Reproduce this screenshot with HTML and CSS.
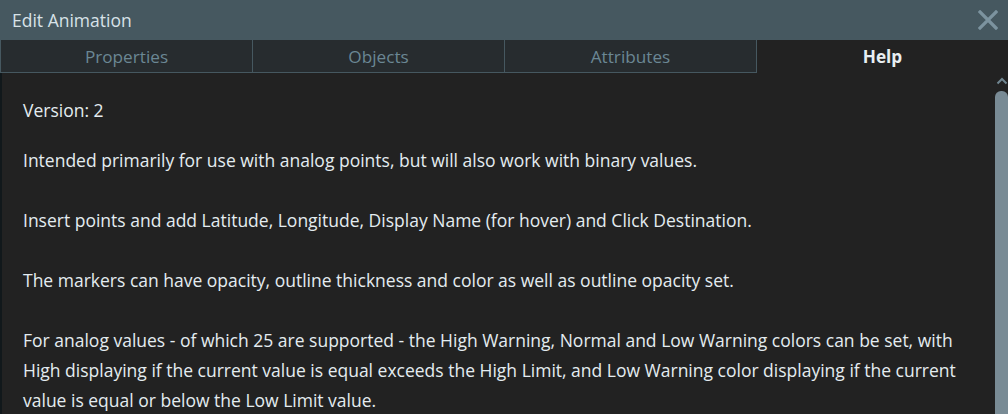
FILE: index.html
```html
<!DOCTYPE html>
<html>
<head>
<meta charset="utf-8">
<link rel="stylesheet" href="styles.css">
</head>
<body>
<div class="dialog">
  <div class="titlebar">
    <span class="title">Edit Animation</span>
    <svg class="close" width="20" height="20" viewBox="0 0 20 20"><path d="M2 2 L18 18 M18 2 L2 18" stroke="#7c939f" stroke-width="3.2" stroke-linecap="square"/></svg>
  </div>
  <div class="tabs">
    <div class="tab">Properties</div>
    <div class="tab">Objects</div>
    <div class="tab">Attributes</div>
    <div class="tab active">Help</div>
  </div>
  <div class="body">
    <div class="content">
      <p class="version">Version: 2</p>
      <p>Intended primarily for use with analog points, but will also work with binary values.</p>
      <p>Insert points and add Latitude, Longitude, Display Name (for hover) and Click Destination.</p>
      <p>The markers can have opacity, outline thickness and color as well as outline opacity set.</p>
      <p>For analog values - of which 25 are supported - the High Warning, Normal and Low Warning colors can be set, with High displaying if the current value is equal exceeds the High Limit, and Low Warning color displaying if the current value is equal or below the Low Limit value.</p>
    </div>
    <div class="scrollbar">
      <svg class="arrow" width="12" height="8" viewBox="0 0 12 8"><path d="M1.5 6.5 L6 2 L10.5 6.5" fill="none" stroke="#6f8590" stroke-width="2"/></svg>
      <div class="thumb"></div>
    </div>
  </div>
</div>
</body>
</html>
```
FILE: styles.css
```css
html, body {
  margin: 0;
  padding: 0;
  background: #222222;
}
.dialog {
  width: 1008px;
  height: 414px;
  overflow: hidden;
  display: flex;
  flex-direction: column;
  font-family: "Open Sans", Lato, sans-serif;
}
.titlebar {
  height: 40px;
  background: #465860;
  display: flex;
  align-items: center;
  justify-content: space-between;
  padding: 0 10px 0 12px;
  flex-shrink: 0;
}
.title {
  color: #d8e2e8;
  font-size: 17.5px;
}
.close {
  display: block;
}
.tabs {
  display: flex;
  height: 33px;
  flex-shrink: 0;
  background: #465860;
  padding-left: 1px;
}
.tab {
  flex: 1;
  background: #272c2f;
  color: #6b8794;
  font-size: 17.2px;
  display: flex;
  align-items: center;
  justify-content: center;
  border-right: 1px solid #465860;
  border-bottom: 1px solid #465860;
}
.tab.active {
  background: #222222;
  color: #e8eef2;
  font-weight: bold;
  border: none;
}
.body {
  flex: 1;
  display: flex;
  border-left: 2px solid #11181b;
  min-height: 0;
}
.content {
  flex: 1;
  padding: 22px 30px 0 21px;
  color: #e4ecf0;
  font-size: 17.5px;
  line-height: 30px;
}
.content p {
  margin: 0 0 30px 0;
}
.content p.version {
  margin-bottom: 20px;
}
.scrollbar {
  width: 13px;
  display: flex;
  flex-direction: column;
  align-items: center;
  padding-top: 4px;
}
.arrow {
  display: block;
  margin-bottom: 6px;
}
.thumb {
  width: 13px;
  flex: 1;
  background: #798b95;
  border-radius: 6px 6px 0 0;
}
```
